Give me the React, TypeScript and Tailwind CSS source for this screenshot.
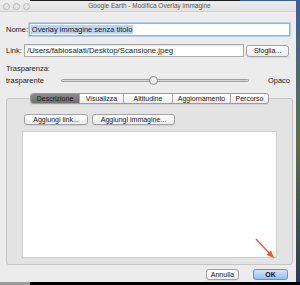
import React from 'react';

const font = { fontFamily: '"Liberation Sans", Arial, sans-serif' };

function Light() {
  return <span className="h-[7px] w-[7px] rounded-full border border-[#b9b9b9] bg-[#e4e4e4]" />;
}

function MacButton({ label, className = '' }: { label: string; className?: string }) {
  return (
    <div
      className={`flex h-[11px] items-center justify-center rounded-[3px] border border-[#a3a3a3] bg-gradient-to-b from-white to-[#ececec] text-[7px] leading-none text-[#222] shadow-[0_1px_0_rgba(0,0,0,0.08)] ${className}`}
    >
      {label}
    </div>
  );
}

const tabs = ['Descrizione', 'Visualizza', 'Altitudine', 'Aggiornamento', 'Percorso'];
const tabWidths = ['w-[48px]', 'w-[44px]', 'w-[49px]', 'w-[58px]', 'w-[38px]'];

export default function App() {
  return (
    <div className="relative flex h-[285px] w-[300px] flex-col overflow-hidden bg-black" style={font}>
      <div className="flex h-px w-full">
        <div className="w-[30px] bg-[#ececec]" />
        <div className="flex-1 bg-[#1a1a1a]" />
        <div className="w-[60px] bg-[#3d5f94]" />
      </div>
      <div className="flex">
        <div className="flex h-[281px] w-[296px] flex-col rounded-t-[4px] bg-[#ececec]">
          {/* title bar */}
          <div className="relative flex h-[11px] items-center border-b border-[#d2d2d2] bg-gradient-to-b from-[#ededed] to-[#e2e2e2] px-[3px]">
            <div className="flex gap-[3px]">
              <Light />
              <Light />
              <Light />
            </div>
            <span className="flex-1 pr-[24px] text-center text-[6.5px] leading-none text-[#555]">
              Google Earth - Modifica Overlay immagine
            </span>
          </div>

          <div className="flex flex-1 flex-col px-[6px] text-[7.5px] leading-none text-[#222]">
            {/* Nome */}
            <div className="mt-[11px] flex items-center">
              <span className="w-[23px]">Nome:</span>
              <div className="flex h-[13px] w-[263px] items-center border border-[#8fb4e6] bg-white px-[1px] shadow-[0_0_0_1px_#b5cff0]">
                <span className="bg-[#b5d5ff] px-[1px] py-[1px]">Overlay immagine senza titolo</span>
              </div>
            </div>
            {/* Link */}
            <div className="mt-[8px] flex items-center">
              <span className="w-[18px]">Link:</span>
              <div className="flex h-[13px] w-[220px] items-center border border-[#a9a9a9] bg-white px-[2px] text-[7.8px] shadow-[inset_0_1px_1px_rgba(0,0,0,0.12)]">
                /Users/fabiosalati/Desktop/Scansione.jpeg
              </div>
              <MacButton label="Sfoglia..." className="ml-[2px] h-[12px] w-[43px]" />
            </div>
            {/* Trasparenza */}
            <div className="mt-[8px]">Trasparenza:</div>
            <div className="mt-[4px] flex items-center">
              <span className="w-[56px]">trasparente</span>
              <div className="relative h-[3px] w-[191px] rounded-full border border-[#a0a0a0] bg-[#d8d8d8]">
                <span className="absolute left-[87px] top-[-4px] h-[9px] w-[9px] rounded-full border border-[#8e8e8e] bg-gradient-to-b from-white to-[#e2e2e2]" />
              </div>
              <span className="ml-[19px]">Opaco</span>
            </div>

            {/* group box with tabs */}
            <div className="relative mt-[14px] flex h-[167px] w-[287px] flex-col rounded-[3px] border border-[#c6c6c6] bg-[#e3e3e3]">
              <div className="absolute left-[23px] top-[-6px] flex h-[11px] overflow-hidden rounded-[3px] border border-[#9c9c9c] bg-gradient-to-b from-white to-[#ededed] shadow-[0_1px_0_rgba(0,0,0,0.08)]">
                {tabs.map((t, i) => (
                  <div
                    key={t}
                    className={`flex items-center justify-center text-[7px] ${tabWidths[i]} ${
                      i === 0
                        ? 'bg-gradient-to-b from-[#8a8a8a] to-[#6f6f6f] text-[#1a1a1a]'
                        : 'border-l border-[#a8a8a8] text-[#222]'
                    }`}
                  >
                    {t}
                  </div>
                ))}
              </div>
              <div className="mt-[15px] flex gap-[4px] pl-[17px]">
                <MacButton label="Aggiungi link..." className="w-[64px]" />
                <MacButton label="Aggiungi immagine..." className="w-[83px]" />
              </div>
              <div className="ml-[15px] mt-[6px] h-[127px] w-[255px] border border-[#cfcfcf] bg-white" />
            </div>

            {/* bottom buttons */}
            <div className="mt-[4px] flex justify-end gap-[14px] pr-[2px]">
              <MacButton label="Annulla" className="w-[33px]" />
              <div className="flex h-[11px] w-[35px] items-center justify-center rounded-[3px] border border-[#6b8fc4] bg-gradient-to-b from-[#d4e6fb] to-[#93bdf0] text-[7px] font-bold text-[#111]">
                OK
              </div>
            </div>
          </div>
        </div>
        <div className="h-[281px] w-[4px] bg-gradient-to-b from-[#3d5f94] via-[#5d6f4a] to-[#2b3c52]" />
      </div>
      <div className="flex h-[3px]">
        <div className="w-[30px] bg-[#9a9a9a]" />
        <div className="flex-1 bg-black" />
      </div>
      {/* red arrow */}
      <svg className="absolute left-[250px] top-[234px]" width="30" height="30" viewBox="0 0 30 30">
        <line x1="6" y1="5" x2="21" y2="21" stroke="#e8553f" strokeWidth="1.3" />
        <polygon points="24,24 16.5,21 21,16.5" fill="#e8553f" />
      </svg>
    </div>
  );
}
